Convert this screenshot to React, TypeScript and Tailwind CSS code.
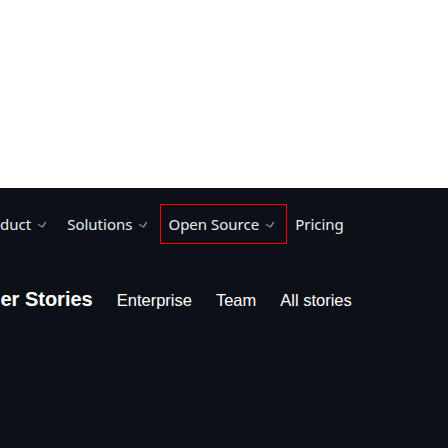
const Chevron = () => (
  <svg width="10" height="8" viewBox="0 0 10 8" className="ml-[6px] mt-[2px] text-[#7d8590]" fill="none">
    <path d="M1.5 3.5 L5.5 6 L8.5 1.5" stroke="currentColor" strokeWidth="1.4" strokeLinecap="round" strokeLinejoin="round" />
  </svg>
);

const navItems = [
  { label: 'Product', menu: true },
  { label: 'Solutions', menu: true },
  { label: 'Open Source', menu: true, active: true },
  { label: 'Pricing', menu: false },
];

const storyLinks = ['Enterprise', 'Team', 'All stories'];

export default function App() {
  return (
    <div className="w-[448px] h-[448px] overflow-hidden flex flex-col bg-white">
      <div className="h-[188px] bg-white" />
      <div className="flex-1 bg-[#0d1117] pt-4">
        <nav
          className="flex items-center ml-[-32px] whitespace-nowrap text-[15px] text-[#e6edf3]"
          style={{ fontFamily: '"Noto Sans", "Open Sans", sans-serif' }}
        >
          {navItems.map((item) =>
            <div
              key={item.label}
              className={
                item.active
                  ? 'flex items-center h-10 pl-[7px] pr-[11px] border border-[#ff0000]'
                  : 'flex items-center h-10 pl-2 pr-3'
              }
            >
              <span>{item.label}</span>
              {item.menu && <Chevron />}
            </div>
          )}
        </nav>

        <div
          className="mt-[41px] ml-[-74px] flex items-baseline gap-6 whitespace-nowrap text-white"
          style={{ fontFamily: '"Liberation Sans", Arial, sans-serif' }}
        >
          <span className="text-[20px] leading-7 font-bold">Customer Stories</span>
          {storyLinks.map((link) => (
            <span key={link} className="text-[16.5px]">{link}</span>
          ))}
        </div>
      </div>
    </div>
  );
}
